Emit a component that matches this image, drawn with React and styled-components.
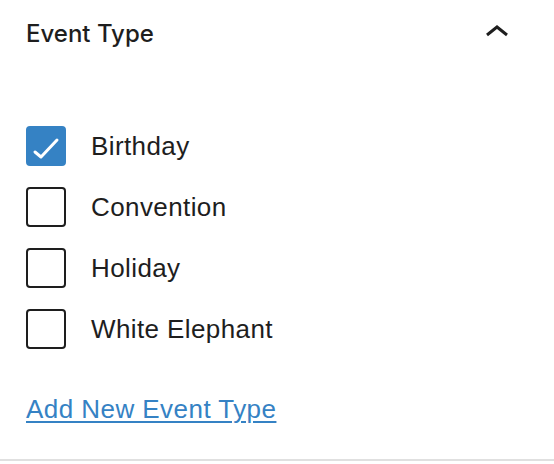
import styled, { createGlobalStyle } from 'styled-components'

const GlobalStyle = createGlobalStyle`
  html, body {
    margin: 0;
    padding: 0;
    background: #ffffff;
  }
  body {
    font-family: "Liberation Sans", Arial, sans-serif;
    color: #1e1e1e;
  }
`

const Panel = styled.section`
  width: 554px;
  box-sizing: border-box;
  padding: 0 26px 30px;
  border-bottom: 2px solid #e0e0e0;
`

const Header = styled.div`
  display: flex;
  align-items: center;
  justify-content: space-between;
  height: 66px;
`

const Title = styled.h2`
  margin: 1px 0 0;
  font-family: Inter, "Liberation Sans", sans-serif;
  font-size: 24px;
  font-weight: 500;
  color: #1e1e1e;
`

const Toggle = styled.button`
  display: flex;
  align-items: center;
  justify-content: center;
  width: 40px;
  height: 40px;
  margin-right: 11px;
  margin-top: -5px;
  padding: 0;
  border: none;
  background: none;
  cursor: pointer;
`

const List = styled.ul`
  list-style: none;
  margin: 60px 0 0;
  padding: 0;
  display: flex;
  flex-direction: column;
  gap: 21px;
`

const Row = styled.li`
  display: flex;
  align-items: center;
  gap: 25px;
  height: 40px;
`

const Box = styled.span`
  display: flex;
  align-items: center;
  justify-content: center;
  box-sizing: border-box;
  width: 40px;
  height: 40px;
  border-radius: 4px;
  border: 2px solid ${p => (p.$checked ? '#3582c4' : '#1e1e1e')};
  background: ${p => (p.$checked ? '#3582c4' : '#fff')};
`

const Label = styled.span`
  font-size: 26px;
  letter-spacing: 0.4px;
  color: #1e1e1e;
`

const AddLink = styled.a`
  display: inline-block;
  margin-top: 40px;
  line-height: 40px;
  font-size: 26px;
  letter-spacing: 0.45px;
  color: #3582c4;
  text-decoration: underline;
  text-underline-offset: 3px;
  text-decoration-thickness: 2px;
`

const types = [
  { name: 'Birthday', checked: true },
  { name: 'Convention', checked: false },
  { name: 'Holiday', checked: false },
  { name: 'White Elephant', checked: false },
]

function Check() {
  return (
    <svg width="36" height="36" viewBox="0 0 36 36" fill="none">
      <path d="M7 24 L13 29 L29 12" stroke="#fff" strokeWidth="3" strokeLinecap="round" strokeLinejoin="round" />
    </svg>
  )
}

export default function App() {
  return (
    <>
      <GlobalStyle />
      <Panel>
        <Header>
          <Title>Event Type</Title>
          <Toggle aria-label="Collapse">
            <svg width="24" height="12" viewBox="0 0 24 12" fill="none">
              <path d="M2 10 L12 2 L22 10" stroke="#1e1e1e" strokeWidth="3" />
            </svg>
          </Toggle>
        </Header>
        <List>
          {types.map(t => (
            <Row key={t.name}>
              <Box $checked={t.checked}>{t.checked && <Check />}</Box>
              <Label>{t.name}</Label>
            </Row>
          ))}
        </List>
        <AddLink href="#add">Add New Event Type</AddLink>
      </Panel>
    </>
  )
}
